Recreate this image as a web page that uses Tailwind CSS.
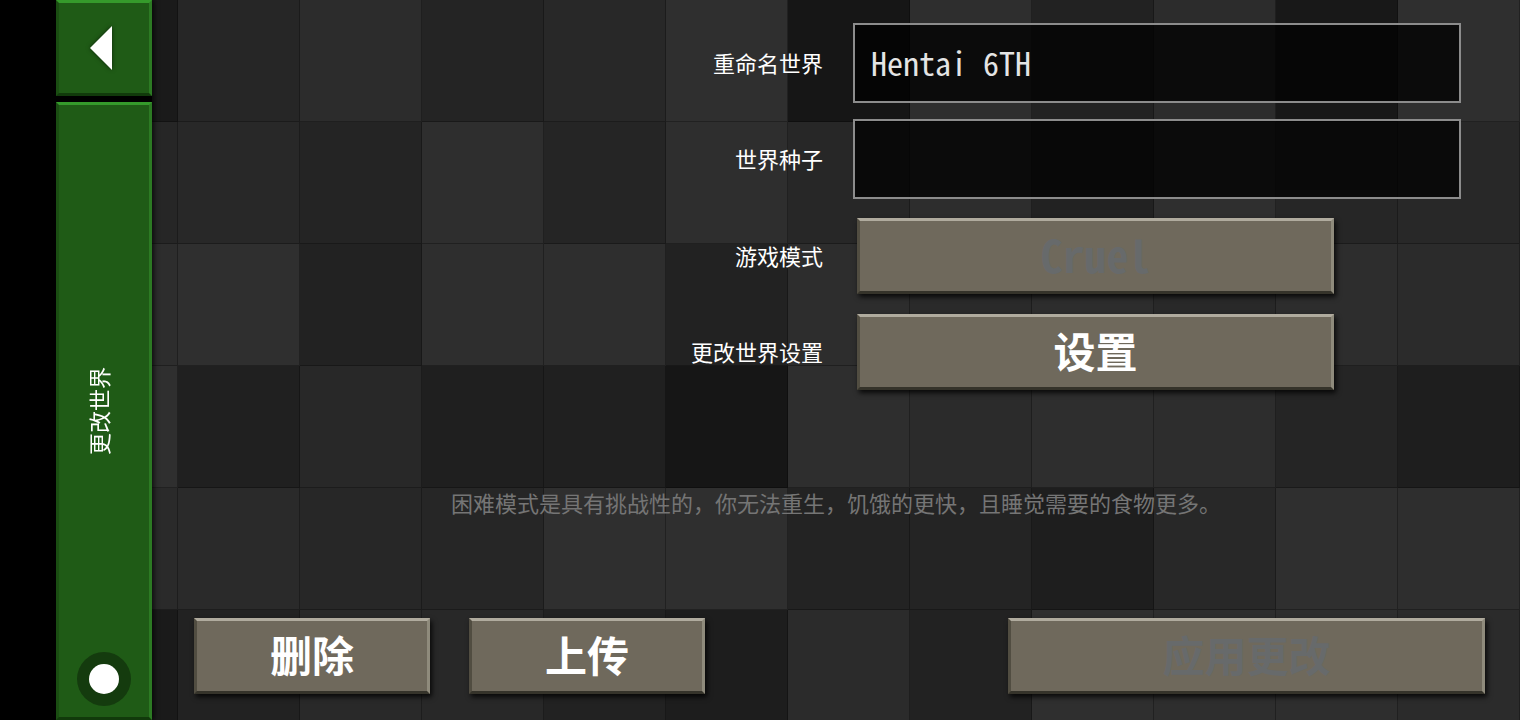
<!DOCTYPE html>
<html lang="zh-CN">
<head>
    <meta charset="UTF-8" />
    <meta name="viewport" content="width=device-width, initial-scale=1" />
    <title>更改世界</title>
    <script src="https://cdn.jsdelivr.net/npm/@tailwindcss/browser@4"></script>
</head>
<body class="bg-black text-white font-light font-['Noto_Sans_Mono_CJK_SC','Noto_Sans_CJK_SC',sans-serif]">
    <div class="relative isolate flex min-h-screen pl-14">
        <!-- tiled stone floor -->
        <div class="absolute inset-y-0 right-0 left-14 -z-10">
            <svg class="block h-full w-full" aria-hidden="true">
                <defs>
                    <pattern id="piso" width="1464" height="732" patternUnits="userSpaceOnUse"></pattern>
                </defs>
                <rect width="100%" height="100%" fill="url(#piso)" />
            </svg>
        </div>

        <aside class="flex w-24 shrink-0 flex-col gap-1.5 bg-black shadow-[2px_0_5px_rgba(0,0,0,0.7)]">
            <button type="button" aria-label="返回"
                class="flex h-24 items-center justify-center border-[3px] border-t-[#359a2b] border-r-[#2c7a23] border-b-[#113a0b] border-l-[#1a4d12] bg-[#1f5b16]">
                <svg class="mr-1 h-12 w-6 drop-shadow-[0_0_2px_rgba(0,0,0,0.6)]" viewBox="0 0 24 48" aria-hidden="true">
                    <path d="M0 24 22 2v44z" fill="#fff" />
                </svg>
            </button>
            <div class="relative flex flex-1 items-center justify-center border-[3px] border-t-[#359a2b] border-r-[#2c7a23] border-b-[#113a0b] border-l-[#1a4d12] bg-[#1f5b16]">
                <h1 class="mr-3 rotate-180 text-[22px] leading-6 [text-orientation:sideways] [writing-mode:vertical-rl]">更改世界</h1>
                <button type="button" aria-label="菜单"
                    class="absolute bottom-[11px] flex size-[54px] items-center justify-center rounded-full bg-[#143b0e]">
                    <span class="size-[30px] rounded-full bg-white"></span>
                </button>
            </div>
        </aside>

        <main class="flex min-w-0 flex-1 flex-col pt-[23px]">
            <form class="flex flex-1 flex-col">
                <div class="grid grid-cols-[671fr_608fr] items-center gap-x-[30px] gap-y-4 pr-[59px] text-[22px]">
                    <label for="nombre" class="pb-0.5 text-right">重命名世界</label>
                    <input type="text" id="nombre" name="nombre" value="Hentai 6TH"
                        class="h-20 w-full border-2 border-[#8c8c8c] bg-black/75 px-4 pb-0.5 text-[32px] text-[#e4e4e4] outline-none" />
                    <label for="semilla" class="pb-0.5 text-right">世界种子</label>
                    <input type="text" id="semilla" name="semilla"
                        class="h-20 w-full border-2 border-[#8c8c8c] bg-black/75 px-4 pb-0.5 text-[32px] text-[#e4e4e4] outline-none" />
                </div>

                <div class="mt-[19px] grid grid-cols-[671fr_608fr] items-center gap-x-[30px] gap-y-5 pr-[59px] text-[22px]">
                    <label for="modo" class="pb-0.5 text-right">游戏模式</label>
                    <button type="button" id="modo" disabled
                        class="ml-1 h-[76px] w-[477px] max-w-full border-[3px] border-t-[#b0ab9e] border-r-[#8f8b7c] border-b-[#35332a] border-l-[#514d41] bg-[#6f695c] pb-1 text-[44px] leading-none font-bold text-[#676a6b] shadow-[2px_3px_5px_rgba(0,0,0,0.8)]">Cruel</button>
                    <label for="ajustes" class="pb-0.5 text-right">更改世界设置</label>
                    <button type="button" id="ajustes"
                        class="ml-1 h-[76px] w-[477px] max-w-full border-[3px] border-t-[#b0ab9e] border-r-[#8f8b7c] border-b-[#35332a] border-l-[#514d41] bg-[#6f695c] pb-1 text-[42px] leading-none font-bold shadow-[2px_3px_5px_rgba(0,0,0,0.8)]">设置</button>
                </div>

                <p class="mt-24 px-4 text-center text-[22px] leading-8 text-[#757575]">困难模式是具有挑战性的，你无法重生，饥饿的更快，且睡觉需要的食物更多。</p>

                <div class="mt-auto flex gap-[39px] pr-[35px] pb-[26px] pl-[42px]">
                    <button type="button"
                        class="h-[76px] w-[236px] border-[3px] border-t-[#b0ab9e] border-r-[#8f8b7c] border-b-[#35332a] border-l-[#514d41] bg-[#6f695c] pb-1 text-[42px] leading-none font-bold shadow-[2px_3px_5px_rgba(0,0,0,0.8)]">删除</button>
                    <button type="button"
                        class="h-[76px] w-[236px] border-[3px] border-t-[#b0ab9e] border-r-[#8f8b7c] border-b-[#35332a] border-l-[#514d41] bg-[#6f695c] pb-1 text-[42px] leading-none font-bold shadow-[2px_3px_5px_rgba(0,0,0,0.8)]">上传</button>
                    <button type="submit" disabled
                        class="ml-auto h-[76px] w-[477px] border-[3px] border-t-[#b0ab9e] border-r-[#8f8b7c] border-b-[#35332a] border-l-[#514d41] bg-[#6f695c] pb-1 text-[42px] leading-none font-bold text-[#676a6b] shadow-[2px_3px_5px_rgba(0,0,0,0.8)]">应用更改</button>
                </div>
            </form>
        </main>
    </div>

    <script>
        // grey level of each floor tile, row by row
        const filas = [
            '1a 26 2c 24 28 2f 16 2e 22 2c 18 2f',
            '26 28 24 2e 25 2e 27 2d 22 2f 26 28',
            '2d 2f 22 2e 2e 22 2d 2a 2d 29 2d 2b',
            '2f 20 28 1f 20 16 2e 2b 2e 2d 25 1e',
            '2a 2a 27 26 2f 2f 23 24 1e 28 2f 2e',
            '1a 22 29 28 22 1d 2b 22 2f 2e 2e 2b',
        ];
        const lado = 122;
        document.getElementById('piso').innerHTML = filas.map((fila, y) =>
            fila.split(' ').map((g, x) => `
                <rect x="${x * lado}" y="${y * lado}" width="${lado}" height="${lado}" fill="#${g}${g}${g}" />
                <path d="M${x * lado} ${(y + 1) * lado}h${lado}v-${lado}h-1v${lado - 1}h-${lado - 1}z" fill="#000" fill-opacity="0.3" />`
            ).join('')
        ).join('');
    </script>
</body>
</html>
